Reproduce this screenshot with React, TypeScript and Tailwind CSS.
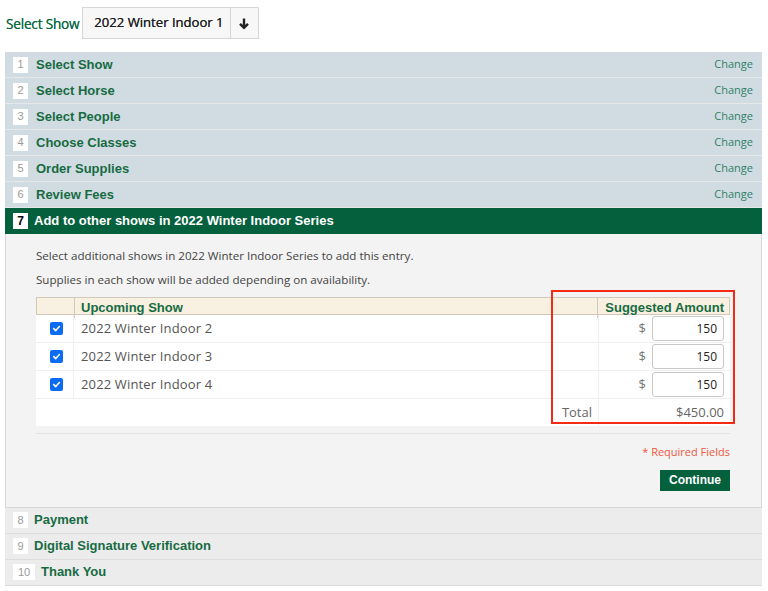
import React from "react";

const done = [
  "Select Show",
  "Select Horse",
  "Select People",
  "Choose Classes",
  "Order Supplies",
  "Review Fees",
];

const later = [
  { n: 8, t: "Payment" },
  { n: 9, t: "Digital Signature Verification" },
  { n: 10, t: "Thank You" },
];

const shows = ["2022 Winter Indoor 2", "2022 Winter Indoor 3", "2022 Winter Indoor 4"];

function Num({ n, active }: { n: number; active?: boolean }) {
  return (
    <span
      className={
        "inline-flex h-[16px] items-center justify-center bg-white text-[11px] font-[Liberation_Sans,sans-serif] " +
        (n === 10 ? "w-[22px] " : "w-[15px] ") +
        (active ? "text-black font-bold text-[12px]" : "text-[#999]")
      }
    >
      {n}
    </span>
  );
}

function Check() {
  return (
    <span className="inline-flex h-[13px] w-[13px] items-center justify-center rounded-[2px] bg-[#0b6cf2]">
      <svg width="9" height="9" viewBox="0 0 10 10">
        <path d="M2 5.2 L4.2 7.3 L8.2 2.8" stroke="white" strokeWidth="1.8" fill="none" strokeLinecap="round" strokeLinejoin="round" />
      </svg>
    </span>
  );
}

export default function App() {
  return (
    <div className="w-[768px] h-[591px] bg-white font-['Open_Sans',sans-serif] overflow-hidden">
      {/* SHOW PICKER */}
      <div className="flex h-[52px] items-start pt-[7px] pl-[6px]">
        <span className="mt-[7px] text-[13.6px] text-[#0f6a44] tracking-[-0.2px] [text-shadow:0_0_0.4px_#0f6a44]">Select Show</span>
        <div className="ml-[3px] flex h-[32px] border border-[#d6d6d6] bg-[#f7f7f7]">
          <span className="flex items-center pl-[11px] pr-[6px] text-[13.1px] text-[#222] [text-shadow:0_0_0.4px_#222]">2022 Winter Indoor 1</span>
          <span className="flex w-[28px] items-center justify-center border-l border-[#d6d6d6]">
            <svg width="12" height="13" viewBox="0 0 12 13">
              <path d="M6 1.5 V10.5 M2 6.8 L6 10.8 L10 6.8" stroke="#222" strokeWidth="2.4" fill="none" strokeLinejoin="miter" />
            </svg>
          </span>
        </div>
      </div>

      {/* ACCORDION */}
      <div className="mx-[5px] w-[757px] font-['Liberation_Sans',sans-serif]">
        {done.map((t, i) => (
          <div
            key={t}
            className="flex h-[26px] items-center border-b border-[#e6e9ea] bg-[#d1dce2] pl-[8px] pr-[9px]"
          >
            <Num n={i + 1} />
            <span className="ml-[8px] text-[13px] font-bold text-[#176b43]">{t}</span>
            <span className="ml-auto font-['Open_Sans',sans-serif] text-[11px] text-[#2f8068]">Change</span>
          </div>
        ))}

        <div className="flex h-[26px] items-center bg-[#04603d] pl-[8px]">
          <Num n={7} active />
          <span className="ml-[6px] text-[13px] font-bold text-white">Add to other shows in 2022 Winter Indoor Series</span>
        </div>

        <div className="border-x border-b border-[#d8d8d8] bg-[#f3f3f3] pl-[30px] pr-[31px] pt-[14px] pb-[16px] font-['Open_Sans',sans-serif]">
          <p className="text-[11.6px] leading-[16px] text-[#444]">
            Select additional shows in 2022 Winter Indoor Series to add this entry.
          </p>
          <p className="mt-[8px] text-[11.6px] leading-[16px] text-[#444]">
            Supplies in each show will be added depending on availability.
          </p>

          <div className="relative mt-[9px] bg-white">
            <div className="pointer-events-none absolute left-[515px] top-[-7px] h-[134px] w-[184px] border-2 border-[#f42a15]" />
            <div className="grid grid-cols-[38px_1fr_60px_132px] h-[18px] bg-[#f8f0e1] border border-[#d4c8b8] font-['Liberation_Sans',sans-serif]">
              <div className="border-r border-[#d4c8b8]" />
              <div className="col-span-2 flex items-center pl-[6px] text-[13px] font-bold text-[#176b43]">Upcoming Show</div>
              <div className="flex items-center justify-end border-l border-[#d4c8b8] pr-[5px] text-[13px] font-bold text-[#176b43]">
                Suggested Amount
              </div>
            </div>
            {shows.map((s) => (
              <div key={s} className="grid grid-cols-[38px_1fr_132px] h-[28px] border-b border-[#efefef]">
                <div className="flex items-center justify-center border-r border-[#efefef] pl-[3px]">
                  <Check />
                </div>
                <div className="flex items-center pl-[7px] text-[13px] tracking-[0.15px] text-[#555]">{s}</div>
                <div className="flex items-center justify-end border-l border-[#efefef] pr-[6px]">
                  <span className="mr-[3px] text-[13px] text-[#777]">$</span>
                  <span className="ml-[3px] flex h-[25px] w-[72px] items-center justify-end rounded-[3px] border border-[#c8c8c8] pr-[6px] text-[12px] text-[#222]">
                    150
                  </span>
                </div>
              </div>
            ))}
            <div className="grid grid-cols-[38px_1fr_132px] h-[27px]">
              <div />
              <div className="flex items-center justify-end pr-[6px] text-[13px] text-[#666]">Total</div>
              <div className="flex items-center justify-end border-l border-[#efefef] pr-[6px] text-[13px] text-[#666]">
                $450.00
              </div>
            </div>
          </div>

          <div className="mt-[7px] border-t border-[#e2e2e2]" />
          <div className="mt-[10px] text-right text-[11px] text-[#f0563e]">* Required Fields</div>
          <div className="mt-[9px] flex justify-end">
            <button className="h-[21px] w-[70px] bg-[#04603d] font-['Liberation_Sans',sans-serif] text-[12px] font-bold text-white">
              Continue
            </button>
          </div>
        </div>

        {later.map((r) => (
          <div
            key={r.n}
            className="flex h-[26px] items-center border-b border-[#dcdcdc] bg-[#ececec] pl-[8px] pr-[9px]"
          >
            <Num n={r.n} />
            <span className="ml-[6px] text-[13px] font-bold text-[#176b43]">{r.t}</span>
          </div>
        ))}
      </div>
    </div>
  );
}
